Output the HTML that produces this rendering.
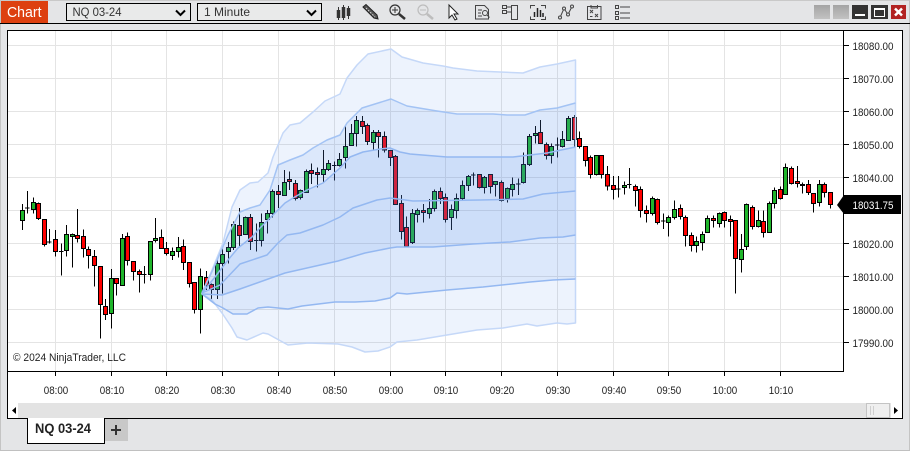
<!DOCTYPE html>
<html>
<head>
<meta charset="utf-8">
<title>Chart</title>
<style>
html,body{margin:0;padding:0;background:#e4e5e7;width:910px;height:451px;overflow:hidden}
svg{display:block;font-family:"Liberation Sans",sans-serif}
.p text{font-size:11px;fill:#222}
.t text{font-size:11px;fill:#222;text-anchor:middle}
.w{fill:none;stroke:#000;stroke-width:3}
.g{fill:#1fb52b;stroke:#000;stroke-width:3}
.r{fill:#f00;stroke:#000;stroke-width:3}
</style>
</head>
<body>
<svg width="910" height="451" viewBox="0 0 910 451" xmlns="http://www.w3.org/2000/svg">
<defs><linearGradient id="b" x1="0" y1="0" x2="0" y2="1"><stop offset="0" stop-color="#a4a4a4"/><stop offset="1" stop-color="#c2c2c2"/></linearGradient></defs>
<rect width="910" height="451" fill="#e4e5e7"/>
<rect x="0" y="0" width="910" height="1" fill="#c9c9c9"/>
<rect x="0" y="0" width="1" height="451" fill="#c4c4c4"/>
<rect x="909" y="0" width="1" height="451" fill="#c4c4c4"/>
<rect x="0" y="450" width="910" height="1" fill="#c0c0c0"/>

<!-- title -->
<rect x="1" y="1" width="47" height="22" fill="#dd4010"/>
<text x="7" y="17" font-size="15" fill="#fff" textLength="34.5" lengthAdjust="spacingAndGlyphs">Chart</text>
<rect x="0" y="23" width="910" height="1" fill="#000"/>

<!-- combos -->
<rect x="66.5" y="3.5" width="124" height="17" fill="#e9eaea" stroke="#000"/>
<text x="72.5" y="16" font-size="12" fill="#333" textLength="49" lengthAdjust="spacingAndGlyphs">NQ 03-24</text>
<path d="M176 10.5l4.5 4.5 4.5-4.5" fill="none" stroke="#000" stroke-width="2"/>
<rect x="197.5" y="3.5" width="124" height="17" fill="#e9eaea" stroke="#000"/>
<text x="204" y="16" font-size="12" fill="#333" textLength="46" lengthAdjust="spacingAndGlyphs">1 Minute</text>
<path d="M307 10.5l4.5 4.5 4.5-4.5" fill="none" stroke="#000" stroke-width="2"/>

<!-- toolbar icons -->
<g fill="none" stroke="#333">
<path d="M338.5 7V20M343.5 5V20M348.5 6V19"/>
<path d="M338.5 10V18M343.5 7V18M348.5 8V16" stroke-width="3.5"/>
<path d="M363 7l3-2.500 11 10.500 1 4-4-1z" fill="#555" stroke="#222"/>
<path d="M366 8l9 9" stroke="#ddd" stroke-dasharray="1.5 1.5"/>
<circle cx="395" cy="10" r="5" stroke-width="1.2"/>
<path d="M392 10h6M395 7v6"/>
<path d="M399 14l6 5" stroke-width="2.5"/>
<g stroke="#bdbdbd"><circle cx="423" cy="10" r="5" stroke-width="1.2"/><path d="M420 10h6"/><path d="M427 14l6 5" stroke-width="2.5"/></g>
<path d="M449 5v13l3-3 3 5 2-1-3-5h4z" fill="#fff" stroke="#222"/>
<path d="M475.5 5.5h9l4 4v9.5h-13zM478 10h4M478 13h3M478 16h4" stroke="#444"/>
<circle cx="485" cy="13" r="2.5" stroke="#444" fill="#e4e5e7"/><path d="M487 15l2.5 2.500" stroke="#444"/>
<path d="M502.5 5.500h4v3h-4zM502.5 10.500h4v3h-4zM506.5 7h5M506.5 12h5M511.5 5.500h6v14h-6z" stroke="#444"/>
<path d="M535 5.500h-4.500v3M541 5.500h4.500v3M535 19.500h-4.500v-3M541 19.500h4.500v-3" stroke="#444"/>
<path d="M534.500 12v5M537.500 8v9M540.500 10v7M543 13v4" stroke="#222" stroke-width="1.5"/>
<path d="M560 17.500l4-9 4 6 4-8" stroke="#444"/>
<g stroke="#444" fill="#e4e5e7"><circle cx="560" cy="17.500" r="1.5"/><circle cx="564" cy="8.500" r="1.5"/><circle cx="568" cy="14.500" r="1.5"/><circle cx="572" cy="6.500" r="1.5"/></g>
<path d="M587.500 6.500h13.500v13h-13.500zM591 5v3h6.500v-3M590 10l3 3M593 10l-3 3M595 14l3 3M598 14l-3 3M590 16.500h2.500" stroke="#444"/>
<path d="M615.500 5.500h3v3h-3zM615.500 11.500h3v3h-3zM615.500 16.500h3v3h-3zM620 7h10M620 13h10M620 18h10" stroke="#444"/>
</g>

<!-- window buttons -->
<rect x="814" y="5" width="16" height="14" fill="url(#b)"/>
<rect x="833" y="5" width="16" height="14" fill="url(#b)"/>
<rect x="852" y="5" width="16" height="14" fill="#333"/>
<rect x="855" y="14" width="10" height="2" fill="#fff"/>
<rect x="871" y="5" width="17" height="14" fill="#333"/>
<rect x="874.5" y="8.500" width="10" height="8" fill="none" stroke="#fff"/><rect x="875" y="8" width="9" height="2" fill="#fff"/>
<rect x="891" y="5" width="15" height="14" fill="#b22222"/>
<path d="M895 8.500l7 7M902 8.500l-7 7" stroke="#fff" stroke-width="2.5"/>

<!-- chart panel -->
<rect x="7.5" y="30.500" width="895" height="388" fill="#fff" stroke="#000"/>

<!-- grid -->
<path d="M8 45.500H843M8 78.500H843M8 111.500H843M8 144.500H843M8 177.500H843M8 210.500H843M8 243.500H843M8 276.500H843M8 309.500H843M8 342.500H843M55.500 31V371M111.500 31V371M166.500 31V371M222.500 31V371M278.500 31V371M334.500 31V371M390.500 31V371M445.500 31V371M501.500 31V371M557.500 31V371M613.500 31V371M668.500 31V371M724.500 31V371M780.500 31V371" stroke="#e4e4e4" fill="none"/>

<!-- candles -->
<g shape-rendering="crispEdges">
<g transform="translate(0 180) scale(.33333)">
<path class="w" d="M67 72V150M82 33V100M100 52V100M115 67V120M133 118V200M148 147V190M166 150V230M184 190V287M199 135V230M217 160V263M232 87V188M250 148V233M265 200V266M283 210V320M301 259V476M316 357V420M334 267V445M349 295V347M367 162V316M382 157V257M400 243V302M418 268V338M433 258V311M451 183V302M466 114V188M484 148V205M499 186V226M517 202V240M535 171V232M550 178V270M568 247V323M583 307V401M601 265V461M619 273V330M634 310V358M652 230V357M667 205V340M685 186V250M75 84.5h14M141 186.5h14M177 214.5h14M426 283.5h14"/>
<path class="g" d="M61.5 92h12v30h-12zM94.5 67h12v21h-12zM193.5 163h12v48h-12zM211.5 163h12v6h-12zM328.5 295h12v105h-12zM361.5 175h12v141h-12zM445.5 184h12v99h-12zM460.5 175h12v6h-12zM511.5 214h12v12h-12zM529.5 202h12v12h-12zM595.5 289h12v99h-12zM646.5 250h12v78h-12zM661.5 223h12v27h-12zM679.5 202h12v12h-12z"/>
<path class="r" d="M109.5 70h12v45h-12zM127.5 118h12v75h-12zM160.5 178h12v36h-12zM226.5 166h12v9h-12zM244.5 169h12v36h-12zM259.5 208h12v18h-12zM277.5 229h12v27h-12zM295.5 259h12v114h-12zM310.5 379h12v24h-12zM343.5 295h12v15h-12zM376.5 169h12v72h-12zM394.5 244h12v30h-12zM412.5 274h12v9h-12zM478.5 172h12v33h-12zM493.5 205h12v15h-12zM544.5 199h12v48h-12zM562.5 247h12v63h-12zM577.5 307h12v81h-12zM613.5 292h12v24h-12zM628.5 313h12v15h-12z"/>
</g>
<g transform="translate(190 110) scale(.33333)">
<path class="w" d="M130 335V420M148 294V410M166 320V375M181 312V420M199 340V425M214 310V410M232 300V370M247 238V322M265 225V294M283 180V258M298 184V240M316 210V272M331 238V268M349 178V248M364 160V222M382 172V232M400 120V216M415 150V183M433 155V212M448 129V170M466 48V175M484 42V108M499 18V110M517 18V72M532 40V105M550 60V118M565 60V142M583 65V128M192 391.5h14M426 166.5h14"/>
<path class="g" d="M124.5 343h12v69h-12zM160.5 322h12v52h-12zM208.5 337h12v54h-12zM226.5 310h12v18h-12zM241.5 244h12v66h-12zM277.5 217h12v39h-12zM325.5 241h12v21h-12zM343.5 184h12v63h-12zM394.5 178h12v15h-12zM409.5 160h12v18h-12zM442.5 148h12v18h-12zM460.5 109h12v33h-12zM478.5 70h12v36h-12zM493.5 31h12v39h-12zM544.5 67h12v30h-12z"/>
<path class="r" d="M142.5 346h12v30h-12zM175.5 322h12v73h-12zM259.5 244h12v9h-12zM292.5 208h12v6h-12zM310.5 220h12v45h-12zM358.5 181h12v9h-12zM376.5 187h12v6h-12zM511.5 34h12v15h-12zM526.5 46h12v48h-12zM559.5 67h12v12h-12zM577.5 79h12v41h-12z"/>
</g>
<g transform="translate(380 110) scale(.33333)">
<path class="w" d="M31 120V168M46 135V285M64 255V388M79 320V412M97 297V402M112 295V338M130 282V338M148 267V326M163 238V305M181 232V282M196 250V338M214 283V360M229 250V326M247 212V268M265 195V243M280 187V226M298 195V235M313 198V250M331 193V250M346 214V260M364 212V275M382 232V278M397 202V260M415 205V255M430 127V220M448 72V168M466 48V100M481 30V102M499 97V148M514 100V161M532 82V143M547 63V112M565 18V92M583 15V112M598 64V116M616 109V170M631 136V206M649 136V196M664 136V205M273 194.5h14M408 221.5h14M525 104.5h14"/>
<path class="g" d="M91.5 310h12v87h-12zM106.5 301h12v12h-12zM142.5 295h12v15h-12zM157.5 244h12v51h-12zM208.5 298h12v24h-12zM223.5 265h12v36h-12zM241.5 226h12v39h-12zM259.5 199h12v27h-12zM307.5 202h12v30h-12zM340.5 214h12v9h-12zM376.5 235h12v30h-12zM391.5 223h12v15h-12zM424.5 163h12v54h-12zM442.5 79h12v84h-12zM460.5 70h12v6h-12zM508.5 109h12v27h-12zM541.5 88h12v21h-12zM559.5 25h12v66h-12zM643.5 136h12v57h-12z"/>
<path class="r" d="M25.5 121h12v21h-12zM40.5 139h12v144h-12zM58.5 280h12v84h-12zM73.5 352h12v57h-12zM124.5 301h12v6h-12zM175.5 244h12v21h-12zM190.5 262h12v66h-12zM292.5 193h12v39h-12zM325.5 193h12v36h-12zM358.5 217h12v54h-12zM475.5 67h12v33h-12zM493.5 103h12v33h-12zM577.5 22h12v66h-12zM592.5 85h12v24h-12zM610.5 109h12v42h-12zM625.5 142h12v51h-12zM658.5 136h12v57h-12z"/>
</g>
<g transform="translate(600 150) scale(.33333)">
<path class="w" d="M22 48V122M40 78V148M55 78V142M73 94V133M88 54V115M106 103V170M121 109V203M139 166V218M157 139V196M172 145V224M190 190V237M205 196V260M223 151V209M241 163V208M256 196V290M274 247V305M289 259V307M307 244V302M322 196V247M340 196V233M358 187V232M373 184V232M391 196V260M406 210V430M424 252V368M439 160V300M457 166V238M475 182V232M490 182V263M508 154V247M523 112V175M541 110V148M556 40V133M574 50V103M592 48V112M607 97V130M625 90V135M640 130V188M658 90V170M673 97V142M691 127V176M48 117.5h14M81 103.5h14M183 212.5h14"/>
<path class="g" d="M67.5 106h12v6h-12zM151.5 145h12v45h-12zM199.5 202h12v15h-12zM217.5 178h12v24h-12zM283.5 274h12v12h-12zM301.5 253h12v24h-12zM316.5 205h12v42h-12zM352.5 190h12v30h-12zM418.5 298h12v30h-12zM433.5 163h12v126h-12zM469.5 211h12v18h-12zM502.5 160h12v87h-12zM517.5 121h12v39h-12zM550.5 52h12v81h-12zM652.5 103h12v54h-12z"/>
<path class="r" d="M16.5 73h12v35h-12zM34.5 106h12v12h-12zM100.5 109h12v12h-12zM115.5 118h12v63h-12zM133.5 181h12v9h-12zM166.5 148h12v69h-12zM235.5 175h12v24h-12zM250.5 202h12v54h-12zM268.5 256h12v30h-12zM334.5 205h12v6h-12zM367.5 187h12v24h-12zM385.5 208h12v6h-12zM400.5 211h12v114h-12zM451.5 172h12v57h-12zM484.5 214h12v33h-12zM535.5 118h12v27h-12zM568.5 55h12v45h-12zM586.5 94h12v6h-12zM601.5 103h12v3h-12zM619.5 103h12v24h-12zM634.5 130h12v30h-12zM667.5 103h12v24h-12zM685.5 127h12v36h-12z"/>
</g>
</g>

<!-- bands -->
<g stroke-linejoin="round">
<path d="M202 293L212 270 223 243 232 207 240 190 250 183 258 182 268 173 273 157 283 133 290 125 300 123 313 112 325 101 340 94 347 78 357 65 368 54 391 49 402 57 423 63 443 66 453 68 477 71 500 72 523 73 540 67 557 64 575.5 60V323L567 324 557 323 537 326 527 324 503 328 477 330 447 335 417 340 397 342 390 347 378 351 365 352 352 347 338 344 308 343 288 345 268 334 263 333 247 340 237 337 232 328 222 313 212 300 202 294z" fill="rgb(75,135,235)" fill-opacity=".1" stroke="#c5d8f8" stroke-width="1.5"/>
<path d="M202 293L215 265 228 235 240 212 250 208 260 205 270 190 278 165 290 160 303 155 313 148 327 140 340 135 347 123 362 108 391 99 407 106 437 111 457 114 493 114 507 115 525 115 540 110 557 108 575.5 103V279L553 280 530 282 483 287 447 290 407 294 397 293 390 298 375 301 355 302 335 302 302 306 288 309 268 307 258 308 247 314 233 314 223 308 215 304 202 294z" fill="rgb(75,135,235)" fill-opacity=".1"/>
<path d="M202 293L215 277 228 260 238 248 252 237 258 230 270 218 285 203 293 198 307 190 323 183 340 168 350 157 363 152 380 149 390 148 400 152 410 154 447 157 513 157 547 153 575.5 147V235L563 237 540 238 510 242 473 244 433 247 397 247 390 248 365 253 338 261 307 268 285 273 240 289 222 295 202 294z" fill="rgb(75,135,235)" fill-opacity=".1"/>
<g fill="none" stroke="#94b8f1" stroke-width="1.5">
<path d="M202 293L215 265 228 235 240 212 250 208 260 205 270 190 278 165 290 160 303 155 313 148 327 140 340 135 347 123 362 108 391 99 407 106 437 111 457 114 493 114 507 115 525 115 540 110 557 108 575.5 103" stroke="#a3c3f4"/>
<path d="M202 293L215 277 228 260 238 248 252 237 258 230 270 218 285 203 293 198 307 190 323 183 340 168 350 157 363 152 380 149 390 148 400 152 410 154 447 157 513 157 547 153 575.5 147"/>
<path d="M202 293L220 285 240 264 267 255 278 243 287 235 300 233 323 225 340 217 353 208 377 200 390 198 413 201 480 200 523 199 543 194 575.5 191"/>
<path d="M202 294L222 295 240 289 285 273 307 268 338 261 365 253 390 248 397 247 433 247 473 244 510 242 540 238 563 237 575.5 235"/>
<path d="M202 294L215 304 223 308 233 314 247 314 258 308 268 307 288 309 302 306 335 302 355 302 375 301 390 298 397 293 407 294 447 290 483 287 530 282 553 280 575.5 279"/>
</g>
</g>

<text x="13" y="361" font-size="11" fill="#222" textLength="113" lengthAdjust="spacingAndGlyphs">© 2024 NinjaTrader, LLC</text>

<!-- axes -->
<path d="M843.5 31V371.5M8 371.5H844" stroke="#000" fill="none"/>
<path d="M844 45.5h5M844 78.5h5M844 111.5h5M844 144.5h5M844 177.5h5M844 210.5h5M844 243.5h5M844 276.5h5M844 309.5h5M844 342.5h5M55.5 372v4M111.5 372v4M166.5 372v4M222.5 372v4M278.5 372v4M334.5 372v4M390.5 372v4M445.5 372v4M501.5 372v4M557.5 372v4M613.5 372v4M668.5 372v4M724.5 372v4M780.5 372v4" stroke="#000" fill="none"/>
<g class="p">
<text x="852.5" y="50" textLength="41" lengthAdjust="spacingAndGlyphs">18080.00</text>
<text x="852.5" y="83" textLength="41" lengthAdjust="spacingAndGlyphs">18070.00</text>
<text x="852.5" y="116" textLength="41" lengthAdjust="spacingAndGlyphs">18060.00</text>
<text x="852.5" y="149" textLength="41" lengthAdjust="spacingAndGlyphs">18050.00</text>
<text x="852.5" y="182" textLength="41" lengthAdjust="spacingAndGlyphs">18040.00</text>
<text x="852.5" y="248" textLength="41" lengthAdjust="spacingAndGlyphs">18020.00</text>
<text x="852.5" y="281" textLength="41" lengthAdjust="spacingAndGlyphs">18010.00</text>
<text x="852.5" y="314" textLength="41" lengthAdjust="spacingAndGlyphs">18000.00</text>
<text x="852.5" y="347" textLength="41" lengthAdjust="spacingAndGlyphs">17990.00</text>
</g>
<path d="M837 205l7-10H901V214H844z" fill="#000"/>
<text x="852.5" y="209" font-size="11" fill="#fff" textLength="41" lengthAdjust="spacingAndGlyphs">18031.75</text>
<g class="t">
<text x="56" y="394" textLength="24.5" lengthAdjust="spacingAndGlyphs">08:00</text>
<text x="112" y="394" textLength="24.5" lengthAdjust="spacingAndGlyphs">08:10</text>
<text x="167" y="394" textLength="24.5" lengthAdjust="spacingAndGlyphs">08:20</text>
<text x="223" y="394" textLength="24.5" lengthAdjust="spacingAndGlyphs">08:30</text>
<text x="279" y="394" textLength="24.5" lengthAdjust="spacingAndGlyphs">08:40</text>
<text x="335" y="394" textLength="24.5" lengthAdjust="spacingAndGlyphs">08:50</text>
<text x="391" y="394" textLength="24.5" lengthAdjust="spacingAndGlyphs">09:00</text>
<text x="446" y="394" textLength="24.5" lengthAdjust="spacingAndGlyphs">09:10</text>
<text x="502" y="394" textLength="24.5" lengthAdjust="spacingAndGlyphs">09:20</text>
<text x="558" y="394" textLength="24.5" lengthAdjust="spacingAndGlyphs">09:30</text>
<text x="614" y="394" textLength="24.5" lengthAdjust="spacingAndGlyphs">09:40</text>
<text x="669" y="394" textLength="24.5" lengthAdjust="spacingAndGlyphs">09:50</text>
<text x="725" y="394" textLength="24.5" lengthAdjust="spacingAndGlyphs">10:00</text>
<text x="781" y="394" textLength="24.5" lengthAdjust="spacingAndGlyphs">10:10</text>
</g>

<!-- scrollbar -->
<rect x="8" y="403" width="894" height="15" fill="#e3e3e3"/>
<rect x="8" y="403" width="10" height="15" fill="#fff"/>
<path d="M12 410.5l4-3.5v7z" fill="#000"/>
<rect x="866.5" y="403.5" width="23" height="14" fill="#efefef" stroke="#c4c4c4"/>
<path d="M870.5 406v9M873.5 406v9" stroke="#cfcfcf" fill="none"/>
<rect x="891" y="403" width="11" height="15" fill="#fff"/>
<path d="M898 410.5l-4-3.5v7z" fill="#000"/>
<rect x="7" y="418" width="896" height="1" fill="#000"/>

<!-- tabs -->
<path d="M27.5 418.5V443.5H104.5V418.5" fill="#fff" stroke="#000"/>
<rect x="28" y="418" width="76" height="2" fill="#fff"/>
<text x="35" y="433" font-size="14" font-weight="bold" fill="#222" textLength="56" lengthAdjust="spacingAndGlyphs">NQ 03-24</text>
<rect x="105" y="419" width="23" height="22" fill="#c8c8c8"/>
<path d="M111 430h10M116 425v10" stroke="#333" stroke-width="2" fill="none"/>
</svg>
</body>
</html>
